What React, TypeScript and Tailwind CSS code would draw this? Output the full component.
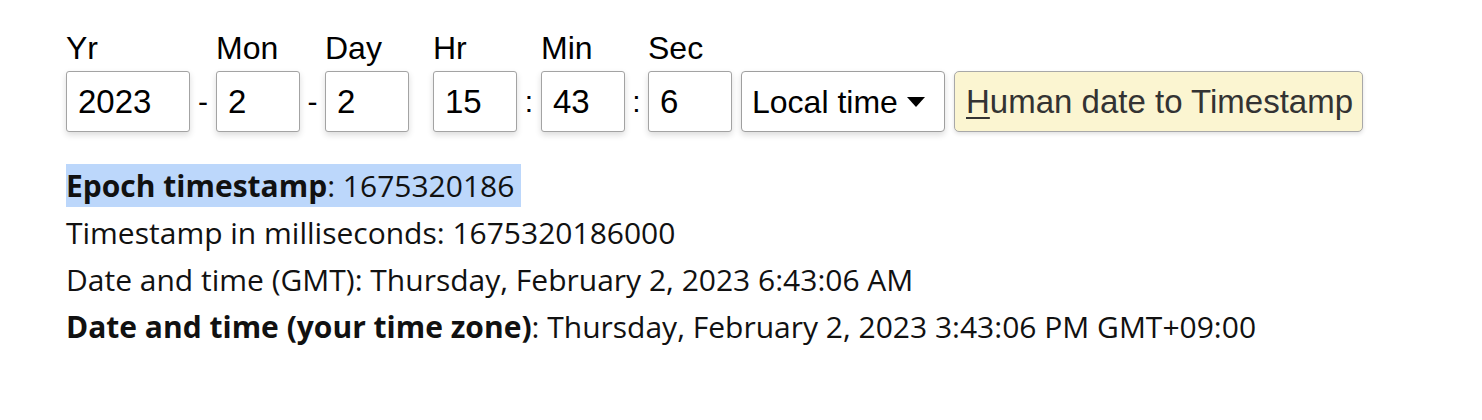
import React from "react";

const inputCls =
  "h-[61px] border border-[#a3a3a3] rounded-[3px] bg-white pl-[11px] flex items-center text-[33px] text-black shadow-[0_3px_6px_rgba(0,0,0,0.14)]";

function Field({ label, value, w }: { label: string; value: string; w: string }) {
  return (
    <div className="flex flex-col">
      <div className="h-[36px] leading-[34px] text-[32px] text-black mb-[4px]">{label}</div>
      <div className={`${inputCls} ${w}`}>{value}</div>
    </div>
  );
}

function Sep({ ch, w }: { ch: string; w: string }) {
  return (
    <div className={`flex flex-col ${w}`}>
      <div className="h-[36px] mb-[4px]" />
      <div className="h-[61px] flex items-center justify-center text-[30px] text-black">{ch}</div>
    </div>
  );
}

export default function App() {
  return (
    <div
      className="w-[1482px] h-[420px] bg-white pl-[66px] pt-[31px]"
      style={{ fontFamily: '"Liberation Sans", Arial, sans-serif' }}
    >
      <div className="flex items-start">
        <Field label="Yr" value="2023" w="w-[124px]" />
        <Sep ch="-" w="w-[26px]" />
        <Field label="Mon" value="2" w="w-[84px]" />
        <Sep ch="-" w="w-[25px]" />
        <Field label="Day" value="2" w="w-[84px]" />
        <div className="w-[24px]" />
        <Field label="Hr" value="15" w="w-[84px]" />
        <Sep ch=":" w="w-[24px]" />
        <Field label="Min" value="43" w="w-[84px]" />
        <Sep ch=":" w="w-[23px]" />
        <Field label="Sec" value="6" w="w-[84px]" />
        <div className="flex flex-col ml-[9px]">
          <div className="h-[36px] mb-[4px]" />
          <div className="h-[61px] w-[204px] border border-[#9f9f9f] rounded-[4px] bg-white pl-[10px] flex items-center text-[32px] text-black shadow-[0_3px_6px_rgba(0,0,0,0.14)]">
            <span>Local time</span>
            <span className="ml-[9px] w-0 h-0 border-l-[9px] border-r-[9px] border-t-[10px] border-l-transparent border-r-transparent border-t-black" />
          </div>
        </div>
        <div className="flex flex-col ml-[9px]">
          <div className="h-[36px] mb-[4px]" />
          <div className="h-[61px] w-[409px] border border-[#a8a8a8] rounded-[5px] bg-[#fbf5d1] pl-[11px] flex items-center text-[33px] text-[#333] shadow-[0_2px_4px_rgba(0,0,0,0.12)]">
            <span>
              <span className="underline underline-offset-[4px] decoration-[2px]">H</span>uman date to Timestamp
            </span>
          </div>
        </div>
      </div>
      <div
        className="mt-[30px] text-[30px] leading-[47px] text-[#111]"
        style={{ fontFamily: '"Open Sans", "Noto Sans", sans-serif' }}
      >
        <div>
          <span className="bg-[#bcd7fb] py-[1px] pr-[7px]">
            <b className="font-bold">Epoch timestamp</b>: 1675320186
          </span>
        </div>
        <div>Timestamp in milliseconds: 1675320186000</div>
        <div>Date and time (GMT): Thursday, February 2, 2023 6:43:06 AM</div>
        <div>
          <b className="font-bold">Date and time (your time zone)</b>: Thursday, February 2, 2023 3:43:06 PM GMT+09:00
        </div>
      </div>
    </div>
  );
}
